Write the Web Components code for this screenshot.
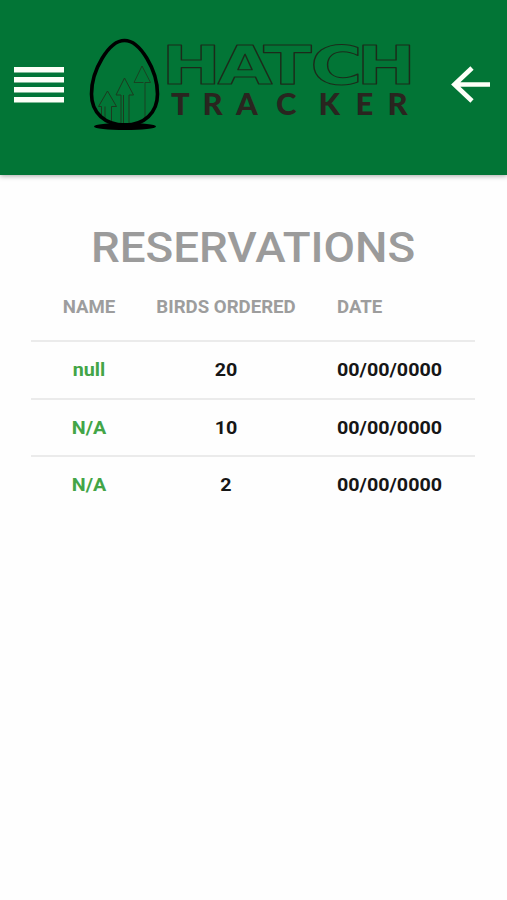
<!DOCTYPE html>
<html lang="en">
<head>
<meta charset="utf-8">
<title>Hatch Tracker</title>
<style>
    body {
        margin: 0;
        background: #fefefe;
        font-family: Roboto, "Liberation Sans", sans-serif;
    }
</style>
</head>
<body>
<hatch-header></hatch-header>
<reservation-list heading="RESERVATIONS">
    <reservation-row head>
        <span slot="name">NAME</span>
        <span slot="birds">BIRDS ORDERED</span>
        <span slot="date">DATE</span>
    </reservation-row>
    <reservation-row>
        <span slot="name">null</span>
        <span slot="birds">20</span>
        <span slot="date">00/00/0000</span>
    </reservation-row>
    <reservation-row>
        <span slot="name">N/A</span>
        <span slot="birds">10</span>
        <span slot="date">00/00/0000</span>
    </reservation-row>
    <reservation-row>
        <span slot="name">N/A</span>
        <span slot="birds">2</span>
        <span slot="date">00/00/0000</span>
    </reservation-row>
</reservation-list>

<script>
const logoTemplate = document.createElement('template');
logoTemplate.innerHTML = `
<style>
    :host {
        display: block;
        width: 330px;
        height: 100px;
    }
    svg {
        display: block;
    }
    .hatch {
        font: bold 53px "DejaVu Sans", sans-serif;
        fill: none;
        stroke: #1c2a1a;
        stroke-width: 1.3;
        stroke-linejoin: round;
        vector-effect: non-scaling-stroke;
    }
    .tracker {
        font: 900 31px Lato, sans-serif;
        fill: #29251f;
    }
</style>
<svg width="330" height="100" viewBox="86 34 330 100">
    <g fill="none" stroke="#1c3a1f" stroke-width="1">
        <path d="M101.500 116V106.500H98.500L107.500 91L116.500 106.500H111.500V124M105 121V106.500"/>
        <path d="M121 124V95H116L124.500 78L133.500 95H129V124M123.500 124V95"/>
        <path d="M143.500 82.500H134L142 66L150.500 82.500H145V118" stroke-opacity=".85"/>
    </g>
    <ellipse cx="125" cy="126.500" rx="31" ry="3.600" fill="#000"/>
    <path d="M124.500 40.500C140 40.500 157.500 70 157.500 94C157.500 113 144 125 125 125C105 125 91.500 113 91.500 94C91.500 70 109 40.500 124.500 40.500Z" fill="none" stroke="#000" stroke-width="3.600"/>
    <g transform="translate(0 84)">
        <text class="hatch" transform="scale(1.340 1)" x="120.500 162.300 196.500 231.500 266">HATCH</text>
    </g>
    <text class="tracker" x="171 202.500 236 276 318.500 355.500 387.500" y="115">TRACKER</text>
</svg>
`;

class HatchLogo extends HTMLElement {
  constructor() {
    super();
    this.attachShadow({ mode: 'open' }).appendChild(logoTemplate.content.cloneNode(true));
  }
}
customElements.define('hatch-logo', HatchLogo);


const headerTemplate = document.createElement('template');
headerTemplate.innerHTML = `
<style>
    :host {
        display: flex;
        align-items: center;
        box-sizing: border-box;
        height: 175px;
        padding: 0 14px 7px;
        background: #027536;
        box-shadow: 0 1px 5px rgba(0, 0, 0, .35);
    }
    button {
        display: block;
        padding: 0;
        border: 0;
        background: none;
    }
    svg {
        display: block;
    }
    hatch-logo {
        margin-left: 22px;
    }
    .back {
        margin-left: 34px;
    }
</style>
<button class="menu" aria-label="Menu">
    <svg width="50" height="38" viewBox="0 0 50 38" fill="#fdfff8">
        <rect y="2" width="50" height="5.500"/>
        <rect y="12" width="50" height="5.500"/>
        <rect y="22" width="50" height="5.500"/>
        <rect y="32" width="50" height="5.500"/>
    </svg>
</button>
<hatch-logo></hatch-logo>
<button class="back" aria-label="Back">
    <svg width="40" height="38" viewBox="0 0 40 38" fill="none" stroke="#fdfff8" stroke-width="4.700">
        <path d="M40 19.500H5M22 3L4.500 19.500L22 36"/>
    </svg>
</button>
`;

class HatchHeader extends HTMLElement {
  constructor() {
    super();
    this.attachShadow({ mode: 'open' }).appendChild(headerTemplate.content.cloneNode(true));
  }
}
customElements.define('hatch-header', HatchHeader);


const rowTemplate = document.createElement('template');
rowTemplate.innerHTML = `
<style>
    :host {
        display: grid;
        grid-template-columns: 116px 158px 1fr;
        box-sizing: border-box;
        height: 57.700px;
        padding-top: 17px;
        border-top: 2px solid #ebebeb;
        font-size: 18px;
        line-height: 21px;
        font-weight: 700;
        color: #161616;
        text-align: center;
    }
    :host([head]) {
        height: 67px;
        padding-top: 23px;
        border-top: 0;
        color: #9d9d9d;
    }
    div {
        transform: scaleX(1.095);
    }
    :host([head]) div {
        transform: scaleX(1.035);
    }
    .name {
        color: #43a547;
    }
    :host([head]) .name {
        color: inherit;
    }
    .date {
        margin-left: 32px;
        text-align: left;
        transform-origin: left;
    }
</style>
<div class="name"><slot name="name"></slot></div>
<div class="birds"><slot name="birds"></slot></div>
<div class="date"><slot name="date"></slot></div>
`;

class ReservationRow extends HTMLElement {
  constructor() {
    super();
    this.attachShadow({ mode: 'open' }).appendChild(rowTemplate.content.cloneNode(true));
  }
}
customElements.define('reservation-row', ReservationRow);


const listTemplate = document.createElement('template');
listTemplate.innerHTML = `
<style>
    :host {
        display: block;
        padding: 46px 32px 0 31px;
    }
    h1 {
        margin: 0;
        font-size: 43px;
        font-weight: 500;
        line-height: 52px;
        text-align: center;
        color: #9b9b9b;
        transform: scaleX(1.063);
    }
</style>
<h1></h1>
<slot></slot>
`;

class ReservationList extends HTMLElement {
  constructor() {
    super();
    this.attachShadow({ mode: 'open' }).appendChild(listTemplate.content.cloneNode(true));
  }

  connectedCallback() {
    this.shadowRoot.querySelector('h1').textContent = this.getAttribute('heading');
  }
}
customElements.define('reservation-list', ReservationList);
</script>
</body>
</html>
